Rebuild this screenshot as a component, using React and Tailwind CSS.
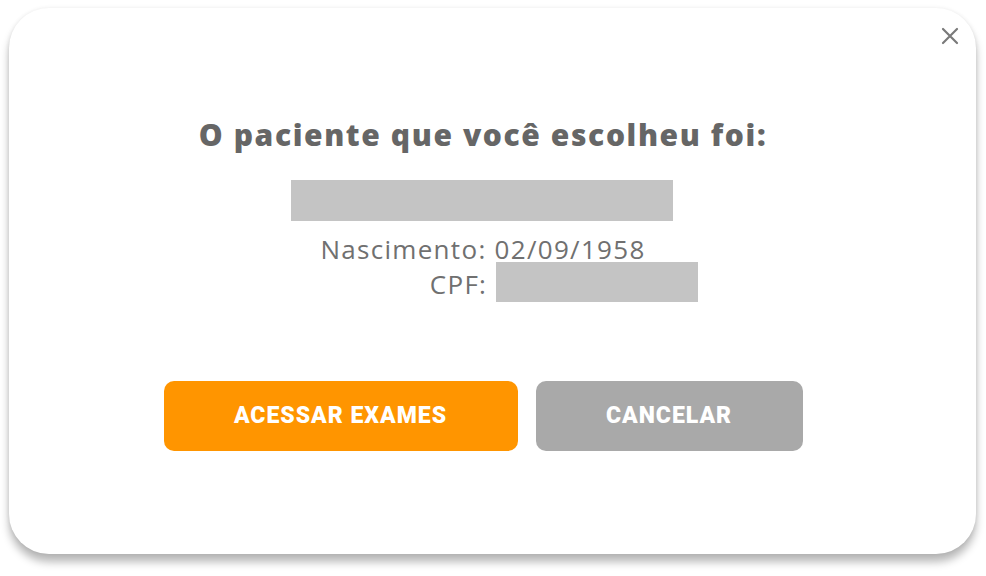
import React from 'react';

export default function App() {
  return (
    <div className="w-[986px] h-[576px] bg-white pt-[8px] pl-[9px]" style={{ fontFamily: '"Open Sans", Roboto, sans-serif' }}>
      <div className="relative w-[967px] h-[546px] bg-white rounded-[40px] shadow-[0_8px_8px_rgba(0,0,0,0.28),0_0_4px_rgba(0,0,0,0.08)] flex flex-col items-center pr-[19px]">
        <button className="absolute right-[16px] top-[18px] w-[20px] h-[20px] flex items-center justify-center text-[#7a7a7a]">
          <svg width="18" height="18" viewBox="0 0 18 18" fill="none" stroke="currentColor" strokeWidth="2.2" strokeLinecap="round">
            <path d="M2 2L16 16M16 2L2 16" />
          </svg>
        </button>

        <h1 className="mt-[107px] text-[30px] leading-[40px] font-extrabold text-[#666666] tracking-[1.6px]">
          O paciente que você escolheu foi:
        </h1>

        <div className="mt-[25px] w-[382px] h-[41px] bg-[#c4c4c4] -ml-[2px]" />

        <p className="mt-[10px] text-[26px] leading-[36px] text-[#707070] tracking-[1.3px]">Nascimento: 02/09/1958</p>

        <div className="flex items-start pl-[162px]">
          <span className="text-[26px] leading-[35px] text-[#707070] mr-[9px] tracking-[1.3px]">CPF:</span>
          <div className="w-[202px] h-[40px] bg-[#c4c4c4] -mt-[5px]" />
        </div>

        <div className="mt-[79px] flex gap-[18px]" style={{ fontFamily: 'Roboto, sans-serif' }}>
          <button className="w-[354px] h-[70px] rounded-[10px] bg-[#ff9500] text-white text-[23px] font-black uppercase tracking-[1px]">
            Acessar exames
          </button>
          <button className="w-[267px] h-[70px] rounded-[10px] bg-[#a9a9a9] text-white text-[23px] font-black uppercase tracking-[1px]">
            Cancelar
          </button>
        </div>
      </div>
    </div>
  );
}
